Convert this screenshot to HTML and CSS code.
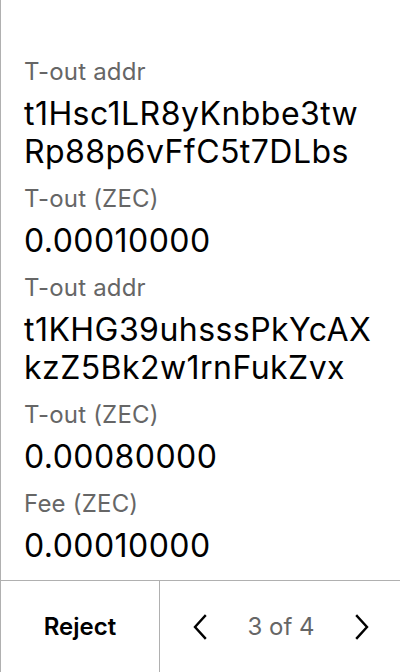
FILE: index.html
```html
<!DOCTYPE html>
<html>
<head>
<meta charset="utf-8">
<link rel="stylesheet" href="styles.css">
</head>
<body>
<div class="screen">
  <div class="content">
    <div class="field">
      <div class="label">T-out addr</div>
      <div class="value">t1Hsc1LR8yKnbbe3tw<br>Rp88p6vFfC5t7DLbs</div>
    </div>
    <div class="field">
      <div class="label">T-out (ZEC)</div>
      <div class="value">0.00010000</div>
    </div>
    <div class="field">
      <div class="label">T-out addr</div>
      <div class="value">t1KHG39uhsssPkYcAX<br>kzZ5Bk2w1rnFukZvx</div>
    </div>
    <div class="field">
      <div class="label">T-out (ZEC)</div>
      <div class="value">0.00080000</div>
    </div>
    <div class="field">
      <div class="label">Fee (ZEC)</div>
      <div class="value">0.00010000</div>
    </div>
  </div>
  <div class="footer">
    <div class="reject">Reject</div>
    <div class="pager">
      <svg class="chev" width="20" height="28" viewBox="0 0 20 28"><path d="M15 3 L5 14 L15 25" fill="none" stroke="#000" stroke-width="2.4" stroke-linecap="square"/></svg>
      <span class="count">3 of 4</span>
      <svg class="chev" width="20" height="28" viewBox="0 0 20 28"><path d="M5 3 L15 14 L5 25" fill="none" stroke="#000" stroke-width="2.4" stroke-linecap="square"/></svg>
    </div>
  </div>
</div>
</body>
</html>
```
FILE: styles.css
```css
* { box-sizing: border-box; }
html, body { margin: 0; padding: 0; background: #fff; }
body { font-family: Inter, "Noto Sans", sans-serif; color: #000; }
.screen {
  width: 400px;
  height: 672px;
  border-left: 1px solid #b0b0b0;
  display: flex;
  flex-direction: column;
}
.content {
  flex: 1;
  padding: 56px 0 0 23px;
}
.field { margin-bottom: 12px; }
.label {
  font-size: 24px;
  line-height: 32px;
  color: #666;
  letter-spacing: 0.2px;
}
.value {
  font-size: 32px;
  line-height: 38px;
  margin-top: 7px;
  letter-spacing: 0.45px;
}
.footer {
  height: 92px;
  border-top: 1px solid #b0b0b0;
  display: flex;
}
.reject {
  width: 159px;
  border-right: 1px solid #b0b0b0;
  display: flex;
  align-items: center;
  justify-content: center;
  font-size: 24px;
  font-weight: 600;
}
.pager {
  flex: 1;
  display: flex;
  align-items: center;
  justify-content: space-between;
  padding: 0 28px 0 30px;
}
.count {
  font-size: 24px;
  color: #666;
}
```
